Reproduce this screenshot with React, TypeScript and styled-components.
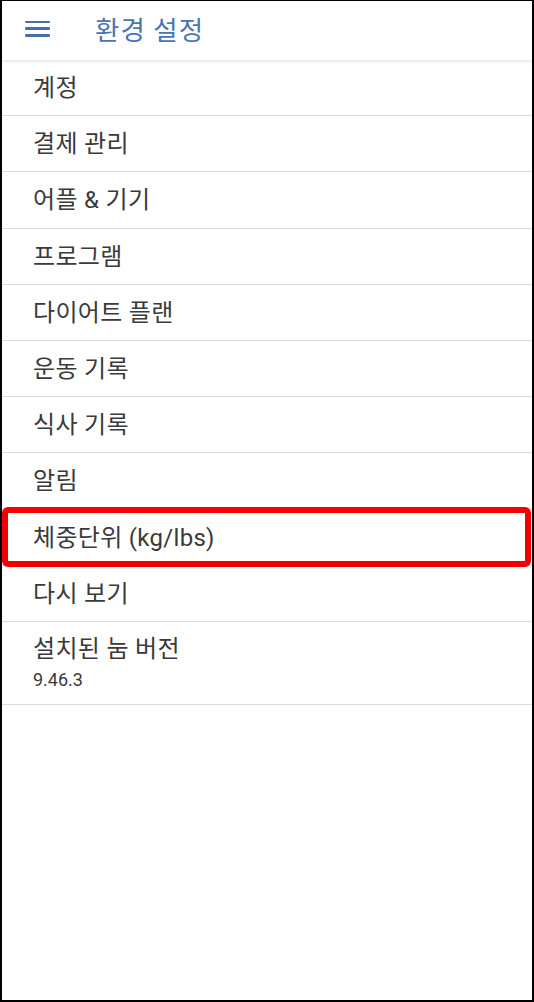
import styled, { createGlobalStyle } from 'styled-components';

const GlobalStyle = createGlobalStyle`
  html, body {
    margin: 0;
    padding: 0;
    background: #fff;
  }
  * { box-sizing: border-box; }
`;

////// STYLE >>>>>>>>>>>>>>>>>>>>>>>>>>>>>>>>>>>>>>>>>>>>>>>>>>>>>>>>>>>>>>>>>>>

const Frame = styled.div`
  width: 534px;
  height: 1002px;
  border: 2px solid #000;
  border-top-width: 1px;
  background: #fff;
  font-family: Roboto, "Noto Sans CJK KR", "Noto Sans", sans-serif;
  overflow: hidden;
`;

const Header = styled.header`
  height: 59px;
  display: flex;
  align-items: center;
  padding-left: 23px;
  padding-bottom: 4px;
  gap: 45px;
  background: #fff;
  box-shadow: 0 2px 3px rgba(0, 0, 0, 0.09);
  position: relative;
  z-index: 1;
`;

const MenuButton = styled.div`
  width: 25px;
  height: 16px;
  display: flex;
  flex-direction: column;
  justify-content: space-between;
`;

const MenuLine = styled.span`
  display: block;
  height: 2.5px;
  background: #4a6eab;
  border-radius: 1px;
`;

const Title = styled.h1`
  margin: 0;
  font-size: 26.5px;
  font-weight: 400;
  color: #4a74b2;
  letter-spacing: 1px;
`;

const List = styled.ul`
  list-style: none;
  margin: 0;
  padding: 0;
`;

const Row = styled.li<{ $tall?: boolean }>`
  position: relative;
  height: ${p => (p.$tall ? 83 : 56.2)}px;
  border-bottom: 1px solid #dcdcdc;
  padding-left: 31px;
  padding-top: 1px;
  display: flex;
  flex-direction: column;
  justify-content: center;
  color: #3a3a3a;
`;

const Label = styled.span`
  font-size: 24px;
  line-height: 30px;
  letter-spacing: 0.3px;
`;

const SubLabel = styled.span`
  font-size: 18px;
  line-height: 24px;
  color: #3a3a3a;
  margin-top: 4px;
`;

const Highlight = styled.div`
  position: absolute;
  left: 0;
  right: 1px;
  top: -3px;
  bottom: -2px;
  border: 6px solid #f50000;
  border-radius: 6px;
  pointer-events: none;
`;

////// COMPONENT >>>>>>>>>>>>>>>>>>>>>>>>>>>>>>>>>>>>>>>>>>>>>>>>>>>>>>>>>>>>>>>

const items = [
  '계정',
  '결제 관리',
  '어플 & 기기',
  '프로그램',
  '다이어트 플랜',
  '운동 기록',
  '식사 기록',
  '알림',
  '체중단위 (kg/lbs)',
  '다시 보기',
];

const App = () => {
  return (
    <>
      <GlobalStyle />
      <Frame>
        <Header>
          <MenuButton>
            <MenuLine />
            <MenuLine />
            <MenuLine />
          </MenuButton>
          <Title>환경 설정</Title>
        </Header>
        <List>
          {items.map(item => (
            <Row key={item}>
              <Label>{item}</Label>
              {item.startsWith('체중단위') && <Highlight />}
            </Row>
          ))}
          <Row $tall>
            <Label>설치된 눔 버전</Label>
            <SubLabel>9.46.3</SubLabel>
          </Row>
        </List>
      </Frame>
    </>
  );
};

export default App;
